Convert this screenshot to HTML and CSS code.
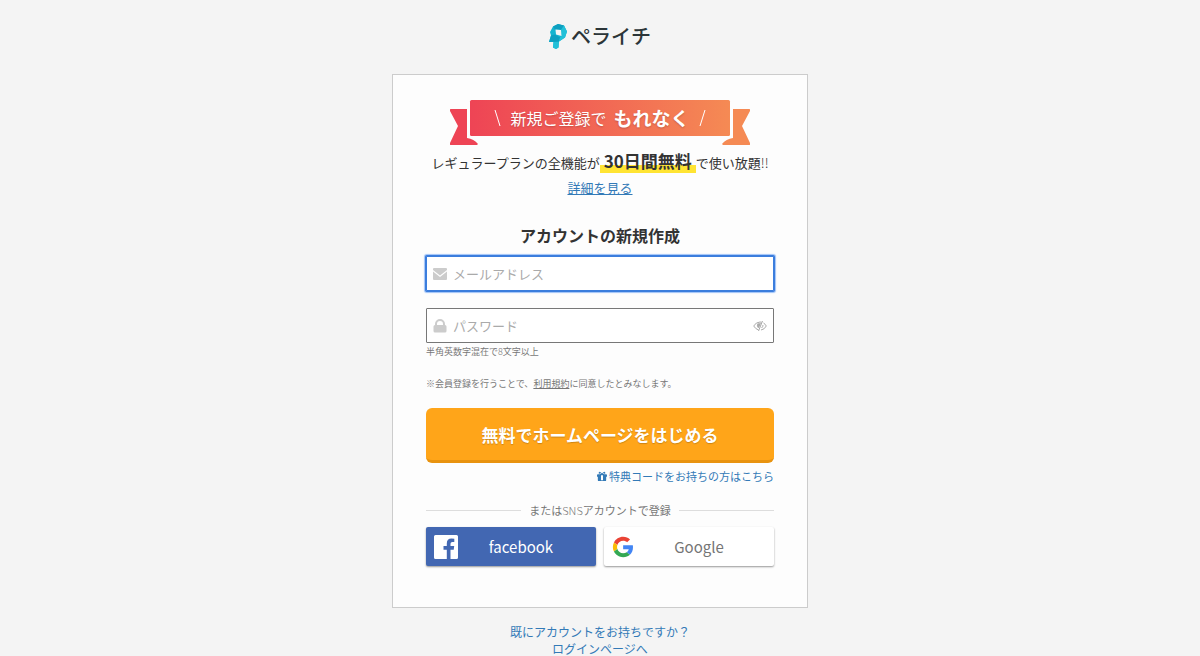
FILE: index.html
```html
<!DOCTYPE html>
<html lang="ja">
<head>
    <meta charset="UTF-8">
    <meta name="viewport" content="width=device-width, initial-scale=1.0">
    <title>アカウントの新規作成 | ペライチ</title>
    <link rel="stylesheet" href="styles.css">
</head>
<body>
    <header class="site-header">
        <a class="logo" href="#">
            <svg class="logo-mark" viewBox="0 0 18 25" aria-hidden="true">
                <path fill="#14b4d0" d="M4 2.500L9 0l6 1.500L18 7.500l-2 6-6 4-.5 6L7 25l-3-1.500.500-5.500H0l2-6.500L1 8z"/>
                <path fill="#0d9fc0" d="M4 2.500L9 0l6 1.500-3 4.500-6-.500zM0 18l2-6.500 4-1 5 3-1 4z"/>
                <path fill="#22c0d8" d="M12 6l3-4.500L18 7.500l-2 6-6 4 1-4 1.500-1.500zM4.500 18h5.300l-.300 5.500L7 25l-3-1.500z"/>
                <path fill="#f4f4f4" d="M6.500 5.500l5.500.500.500 6-5.500-1.500z"/>
            </svg>
            <span>ペライチ</span>
        </a>
    </header>
    <main class="card">
        <div class="ribbon">
            <svg class="ribbon-bg" viewBox="0 0 300 45" aria-hidden="true">
                <defs>
                    <linearGradient id="ribbonColor" x1="0" x2="1" y1="0" y2="0">
                        <stop offset="0" stop-color="#ee4455"/>
                        <stop offset="1" stop-color="#f58a54"/>
                    </linearGradient>
                </defs>
                <path fill="#ee4455" d="M1 9h16v29q7 1 11 6l-1 1H1q-2 0-1-2l8-17L0 11q-1-2 1-2z"/>
                <path fill="#f58a54" d="M299 9h-16v29q-7 1-11 6l1 1h26q2 0 1-2l-8-17 8-15q1-2-1-2z"/>
                <rect fill="url(#ribbonColor)" x="20" width="260" height="36" rx="1.500"/>
            </svg>
            <p class="ribbon-text">
                <svg class="slash" viewBox="0 0 7 16" aria-hidden="true"><path d="M1 0l5 16"/></svg>
                <span>新規ご登録で</span>
                <strong>もれなく</strong>
                <svg class="slash" viewBox="0 0 7 16" aria-hidden="true"><path d="M6 0L1 16"/></svg>
            </p>
        </div>
        <p class="lead">レギュラープランの全機能が<strong>30日間無料</strong>で使い放題<span class="thin">!!</span></p>
        <p class="detail"><a href="#">詳細を見る</a></p>

        <form class="signup">
            <h1>アカウントの新規作成</h1>
            <div class="field active">
                <label for="email" aria-label="メールアドレス">
                    <svg class="field-icon" viewBox="0 0 14 14" aria-hidden="true">
                        <path d="M1 1h12q1 0 1 1v1L7 8.500 0 3V2q0-1 1-1zM0 4.500L7 10l7-5.500V12q0 1-1 1H1q-1 0-1-1z"/>
                    </svg>
                </label>
                <input type="email" id="email" placeholder="メールアドレス">
            </div>
            <div class="field">
                <label for="password" aria-label="パスワード">
                    <svg class="field-icon" viewBox="0 0 14 14" aria-hidden="true">
                        <path d="M2 6V5a5 5 0 0 1 10 0v1q1.500 0 1.500 1.500V12q0 1.500-1.500 1.500H2Q.5 13.500.5 12V7.500Q.5 6 2 6zm2 0h6V5a3 3 0 0 0-6 0z"/>
                    </svg>
                </label>
                <input type="password" id="password" placeholder="パスワード">
                <button type="button" class="toggle" aria-label="パスワードを表示">
                    <svg viewBox="0 0 14 12" aria-hidden="true">
                        <path d="M5.500 10Q2.500 9 .7 6 3 2 7 2l1.500.200M10.500 3q1.800 1 2.800 3-1.800 3.500-5.300 4M9.500 1l-4 10M5 3.500Q3.500 6 5.500 8M10 5q0 2-1.500 3"/>
                        <path class="pupil" d="M5 3.500L8 3 6 8Q3.500 6 5 3.500z"/>
                    </svg>
                </button>
            </div>
            <p class="hint">半角英数字混在で<span class="thin">8</span>文字以上</p>
            <p class="terms">※会員登録を行うことで、<a href="#">利用規約</a>に同意したとみなします。</p>
            <button type="submit" class="submit">無料でホームページをはじめる</button>
        </form>

        <p class="coupon">
            <a href="#">
                <svg viewBox="0 0 12 12" aria-hidden="true">
                    <path fill-rule="evenodd" d="M1 4h3Q1.500 3.500 2 2q1-2.500 4 1 3-3.500 4-1 .5 1.500-2 2h3q1 0 1 1v2h-1v4q0 1-1 1H2q-1 0-1-1V7H0V5q0-1 1-1zm2-1.300q0 .6 2 .6-1.500-2-2-.600zm6 0q-.5-1.400-2 .6 2 0 2-.600zM4.800 5v6h2.400V5z"/>
                </svg>
                特典コードをお持ちの方はこちら
            </a>
        </p>

        <div class="divider"><span>または<span class="thin">SNS</span>アカウントで登録</span></div>

        <div class="sns">
            <button type="button" class="sns-button facebook">
                <svg viewBox="0 0 24 24" aria-hidden="true">
                    <path fill="#fff" d="M1.500 0h21Q24 0 24 1.500v21q0 1.500-1.500 1.500h-6v-9.300h3.200l.5-3.600h-3.700V8.800q0-1.800 1.800-1.800h2V3.800q-1-.2-2.800-.2-4.700 0-4.700 4.800v2.700H9.500v3.600h3.300V24H1.500Q0 24 0 22.500v-21Q0 0 1.500 0z"/>
                </svg>
                <span>facebook</span>
            </button>
            <button type="button" class="sns-button google">
                <svg viewBox="-2 -4 56 56" aria-hidden="true">
                    <path fill="#ea4335" d="M24 9.500c3.540 0 6.710 1.220 9.210 3.600l6.850-6.850C35.900 2.380 30.470 0 24 0 14.620 0 6.510 5.380 2.560 13.220l7.980 6.190C12.430 13.720 17.740 9.500 24 9.500z"/>
                    <path fill="#4285f4" d="M46.980 24.550c0-1.570-.15-3.090-.38-4.550H24v9.020h12.940c-.58 2.960-2.260 5.480-4.780 7.180l7.730 6c4.510-4.180 7.090-10.360 7.090-17.650z"/>
                    <path fill="#fbbc05" d="M10.530 28.590c-.48-1.450-.76-2.990-.76-4.590s.27-3.140.76-4.590l-7.980-6.190C.92 16.460 0 20.120 0 24c0 3.880.92 7.540 2.560 10.780l7.970-6.190z"/>
                    <path fill="#34a853" d="M24 48c6.480 0 11.930-2.130 15.890-5.810l-7.730-6c-2.150 1.450-4.920 2.300-8.160 2.300-6.260 0-11.570-4.220-13.470-9.910l-7.980 6.190C6.510 42.620 14.620 48 24 48z"/>
                </svg>
                <span>Google</span>
            </button>
        </div>
    </main>
    <footer class="login">
        <a href="#">既にアカウントをお持ちですか？<br>ログインページへ</a>
    </footer>
</body>
</html>
```
FILE: styles.css
```css
* {
    box-sizing: border-box;
}

body {
    margin: 0;
    background-color: #f4f4f4;
    color: #333;
    font-family: "Noto Sans CJK JP", sans-serif;
    font-size: 13px;
    line-height: 20px;
}

p, h1 {
    margin: 0;
}

a {
    color: #337ab7;
}

button, input {
    font-family: inherit;
}

/* ヘッダー */
.site-header {
    display: flex;
    justify-content: center;
    padding: 22px 0 24px;
}

.logo {
    display: flex;
    align-items: center;
    gap: 4px;
    color: #2b3538;
    font-size: 20px;
    font-weight: 500;
    line-height: 28px;
    text-decoration: none;
}

.logo-mark {
    width: 18px;
    height: 25px;
}

/* 登録カード */
.card {
    width: 100%;
    max-width: 416px;
    margin: 0 auto;
    padding: 25px 33px 41px;
    background-color: #fdfdfd;
    border: 1px solid #ccc;
}

.ribbon {
    display: grid;
    justify-content: center;
}

.ribbon-bg,
.ribbon-text {
    grid-area: 1 / 1;
}

.ribbon-bg {
    width: 300px;
    height: 45px;
}

.ribbon-text {
    display: flex;
    justify-content: center;
    align-items: center;
    gap: 7px;
    height: 36px;
    color: #fff;
    font-size: 16px;
    text-shadow: 0 1px 2px rgba(0, 0, 0, 0.2);
}

.ribbon-text strong {
    font-size: 19px;
}

.slash {
    width: 7px;
    height: 16px;
    margin: 0 2px;
    fill: none;
    stroke: #fff;
}

.thin {
    font-weight: 300;
}

.lead {
    margin-top: 3px;
    line-height: 26px;
    text-align: center;
    white-space: nowrap;
}

.lead strong {
    padding: 0 4px;
    background: linear-gradient(#ffe433, #ffe433) 0 17px / 100% 8px no-repeat;
    font-size: 17px;
}

.detail {
    margin-top: 2px;
    text-align: center;
}

.signup h1 {
    margin: 25px 0 9px;
    font-size: 16px;
    line-height: 24px;
    text-align: center;
}

.field {
    display: flex;
    align-items: center;
    gap: 6px;
    height: 35px;
    padding: 0 6px;
    background-color: #fff;
    border: 1px solid #777;
    border-radius: 1px;
}

.field + .field {
    margin-top: 17px;
}

.field.active {
    border-color: #3b7ddd;
    box-shadow: 0 0 0 1px #3b7ddd, 0 0 1px 2px #9fc3f8;
}

.field label {
    display: flex;
}

.field-icon {
    width: 14px;
    height: 14px;
    fill: #ccc;
}

.field input {
    flex: 1;
    min-width: 0;
    padding: 0;
    background: none;
    border: none;
    outline: none;
    color: #333;
    font-size: 13px;
    line-height: 20px;
}

.field input::placeholder {
    color: #aaa;
}

.toggle {
    display: flex;
    padding: 0;
    background: none;
    border: none;
    cursor: pointer;
}

.toggle svg {
    width: 14px;
    height: 12px;
    fill: none;
    stroke: #aaa;
}

.toggle .pupil {
    fill: #aaa;
    stroke: none;
}

.hint,
.terms {
    color: #777;
    font-size: 9px;
    line-height: 16px;
}

.hint {
    margin-top: 1px;
}

.terms {
    margin-top: 16px;
}

.terms a {
    color: #777;
}

.submit {
    display: block;
    width: 100%;
    height: 55px;
    margin-top: 16px;
    padding: 0;
    background-color: #ffa519;
    border: none;
    border-bottom: 3px solid #e8930f;
    border-radius: 6px;
    color: #fff;
    font-size: 17px;
    font-weight: bold;
    text-shadow: 0 1px 1px rgba(0, 0, 0, 0.2);
    cursor: pointer;
}

.coupon {
    margin-top: 3px;
    font-size: 11px;
    text-align: right;
}

.coupon a {
    display: inline-flex;
    align-items: center;
    gap: 2px;
    text-decoration: none;
}

.coupon svg {
    width: 10px;
    height: 10px;
    fill: #337ab7;
}

.divider {
    display: flex;
    align-items: center;
    gap: 8px;
    margin-top: 14px;
    color: #777;
    font-size: 11px;
}

.divider::before,
.divider::after {
    content: "";
    flex: 1;
    border-top: 1px solid #ddd;
}

/* SNSボタン */
.sns {
    display: grid;
    grid-template-columns: 1fr 1fr;
    gap: 8px;
    margin-top: 7px;
}

.sns-button {
    display: flex;
    align-items: center;
    height: 39px;
    padding: 0 12px 0 8px;
    border: none;
    border-radius: 2px;
    box-shadow: 0 1px 2px rgba(0, 0, 0, 0.4);
    font-size: 15px;
    cursor: pointer;
}

.sns-button svg {
    width: 24px;
    height: 24px;
}

.sns-button span {
    flex: 1;
}

.facebook {
    background-color: #4267b2;
    color: #fff;
}

.google {
    background-color: #fff;
    color: #757575;
}

.login {
    padding-top: 15px;
    font-size: 12px;
    line-height: 17px;
    text-align: center;
}

.login a {
    text-decoration: none;
}
```
